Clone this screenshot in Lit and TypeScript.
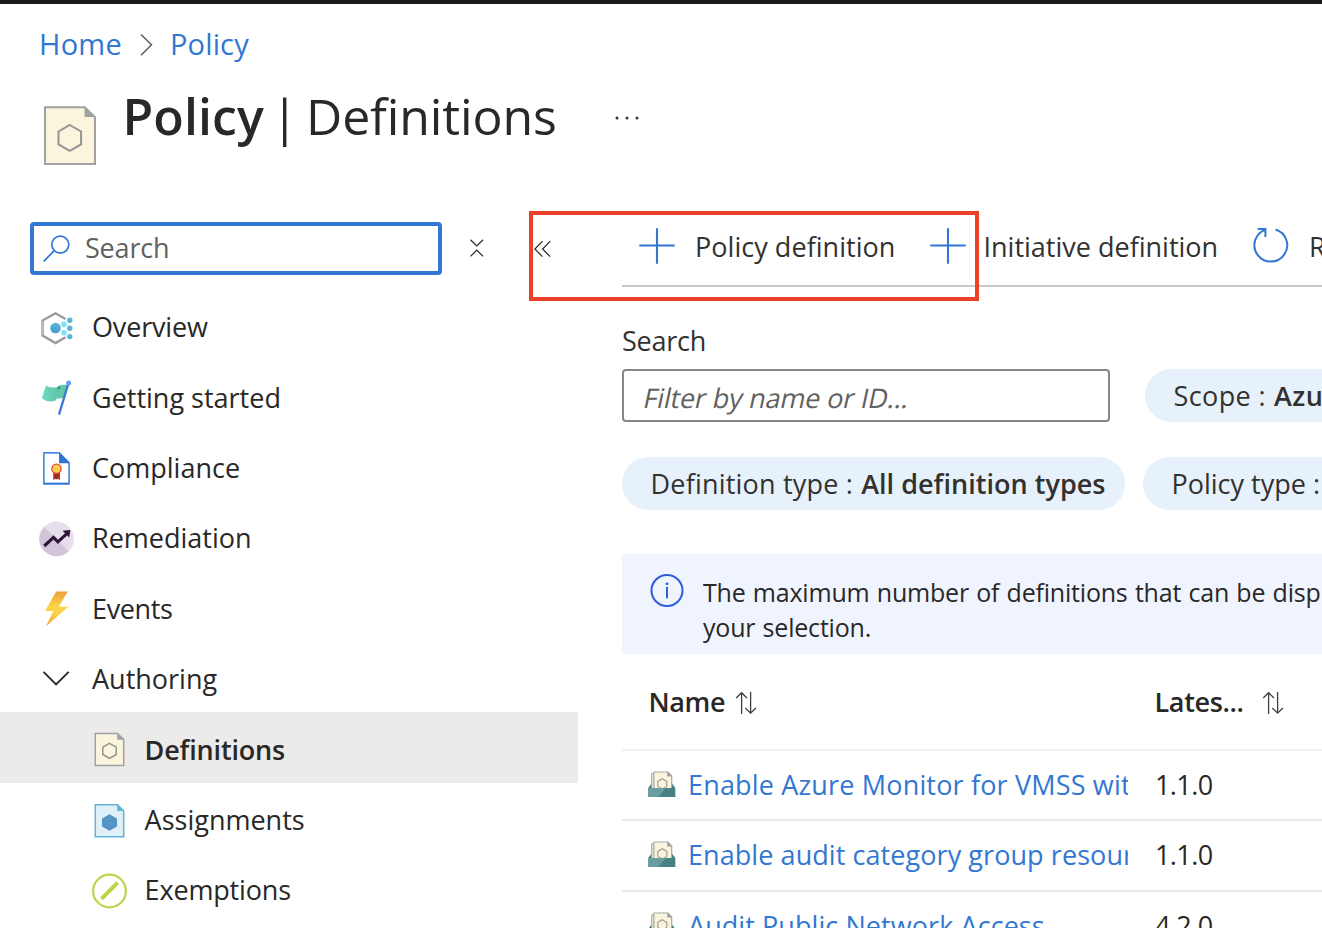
import { LitElement, html, css, svg } from "lit";
import { customElement } from "lit/decorators.js";
import { classMap } from "lit/directives/class-map.js";

const icons = {
  overview: svg`<svg width="36" height="36" viewBox="0 0 36 36">
    <defs><linearGradient id="ov" x1="0" y1="0" x2="0" y2="1"><stop offset="0" stop-color="#5cb6dc"/><stop offset="1" stop-color="#3f9cd0"/></linearGradient></defs>
    <path d="M26.500 9 16.500 3.300 3.600 10.500v15L16.500 33l10-5.800" fill="none" stroke="#9b9b9b" stroke-width="2.400"/>
    <path d="M3.600 10.500v15" stroke="#b5b5b5" stroke-width="2.400"/>
    <circle cx="16.500" cy="18" r="5.300" fill="url(#ov)"/>
    <circle cx="25" cy="14.400" r="2.800" fill="#7fe3ff"/><circle cx="25" cy="22.700" r="2.800" fill="#7fe3ff"/>
    <circle cx="30.800" cy="10.200" r="2.700" fill="#55b6d9"/><circle cx="30.800" cy="18.300" r="2.700" fill="#55b6d9"/><circle cx="30.800" cy="26.600" r="2.700" fill="#55b6d9"/>
  </svg>`,
  started: svg`<svg width="36" height="36" viewBox="0 0 36 36">
    <defs><linearGradient id="fl" x1="0" y1="0" x2="1" y2="0"><stop offset="0" stop-color="#6fdcc0"/><stop offset="1" stop-color="#5cc2a5"/></linearGradient></defs>
    <path d="M18.500 6.200q4-1.900 10.500-1.200l-4 13.500q-4.500-.8-7.500 1z" fill="#60c9aa"/>
    <path d="M7 5.700q6 2.700 11.500 1.600l2.500-.9-4.300 14.200q-8 2.500-13.900-2.300z" fill="url(#fl)"/>
    <path d="m17.500 8 3.700-1.700-.6 3.300z" fill="#3c8b75"/>
    <path d="M29.200 4 20 34.600" stroke="#3b7ad6" stroke-width="2.300"/>
    <circle cx="29.600" cy="3" r="2.500" fill="#6c9ee8"/>
  </svg>`,
  compliance: svg`<svg width="36" height="36" viewBox="0 0 36 36">
    <path d="M4.800 1.800h15.400l9.900 10v20.900H4.800z" fill="#fff" stroke="#4b8de4" stroke-width="1.700" stroke-linejoin="round"/>
    <path d="M4.800 32.700h25.300" stroke="#3173cf" stroke-width="1.700"/>
    <path d="M20 1.200 30.900 12.300H20z" fill="#3173cf"/>
    <path d="M14.300 21h6.600v8.200l-2-1.500-1.300.9-1.300-.9-2 1.500z" fill="#a52a22"/>
    <circle cx="17.500" cy="17.800" r="5.300" fill="#e34b3a"/><circle cx="17.500" cy="17.800" r="4" fill="#f6d04a"/>
  </svg>`,
  remediation: svg`<svg width="36" height="36" viewBox="0 0 36 36">
    <circle cx="17.500" cy="18" r="17.400" fill="#e6dfeb"/>
    <path d="M5.200 5.700a17.400 17.400 0 0 0 24.600 24.600z" fill="#d2c5da"/>
    <path d="m5.300 25 9.200-8.600 4.400 4.400 9-8.100" fill="none" stroke="#2f1338" stroke-width="3.100"/>
    <path d="M23.600 9.800 31.300 9l-1.100 7.600z" fill="#2f1338"/>
  </svg>`,
  events: svg`<svg width="36" height="36" viewBox="0 0 36 36">
    <defs><linearGradient id="ev" x1="0" y1="0" x2="0" y2="1"><stop offset="0" stop-color="#eea03c"/><stop offset=".45" stop-color="#fad648"/><stop offset=".65" stop-color="#f9d246"/><stop offset="1" stop-color="#ef9f3e"/></linearGradient></defs>
    <path d="M17.200 .5h11.600l-9 15.200h9.500L7 35.200 14.200 20H6z" fill="url(#ev)"/>
  </svg>`,
  authoring: svg`<svg width="36" height="36" viewBox="0 0 36 36">
    <path d="m4.500 9.900 12.600 12.500L29.700 9.900" fill="none" stroke="#292827" stroke-width="1.900"/>
  </svg>`,
  definitions: svg`<svg width="36" height="36" viewBox="0 0 36 36">
    <path d="M3.300 1.500h22.200l6.200 6v26H3.300z" fill="#fcf5de" stroke="#a0a1a2" stroke-width="1.500"/>
    <path d="M25.200 1.200 32 7.800h-6.800z" fill="#a0a1a2"/>
    <path d="m17.500 11.300 6.700 3.800v7.400l-6.700 3.800-6.700-3.800v-7.400z" fill="none" stroke="#949390" stroke-width="1.500"/>
  </svg>`,
  assignments: svg`<svg width="36" height="36" viewBox="0 0 36 36">
    <path d="M3.300 1.800h22.200l6.200 6v26H3.300z" fill="#e0f0f8" stroke="#65b2d7" stroke-width="1.500"/>
    <path d="M25.200 1.200 32 8.100h-6.800z" fill="#65b2d7"/>
    <path d="m17.500 11.200 7.500 4.200v8.100l-7.500 4.200-7.500-4.200v-8.100z" fill="#5594c4"/>
  </svg>`,
  exemptions: svg`<svg width="36" height="36" viewBox="0 0 36 36">
    <circle cx="17.500" cy="18" r="16.400" fill="#fff" stroke="#bad54b" stroke-width="2.200"/>
    <path d="M10.900 24.500 24.200 11.200" stroke="#bad54b" stroke-width="4" stroke-linecap="square"/>
  </svg>`,
};

type IconName = keyof typeof icons;

interface NavItem {
  label: string;
  icon: IconName;
  child?: boolean;
  active?: boolean;
  spacing?: "tight" | "tighter";
}

const nav: NavItem[] = [
  { label: "Overview", icon: "overview", spacing: "tight" },
  { label: "Getting started", icon: "started" },
  { label: "Compliance", icon: "compliance" },
  { label: "Remediation", icon: "remediation" },
  { label: "Events", icon: "events", spacing: "tighter" },
  { label: "Authoring", icon: "authoring" },
  { label: "Definitions", icon: "definitions", child: true, active: true, spacing: "tight" },
  { label: "Assignments", icon: "assignments", child: true },
  { label: "Exemptions", icon: "exemptions", child: true, spacing: "tight" },
];

const rows = [
  { name: "Enable Azure Monitor for VMSS with", version: "1.1.0", wide: true },
  { name: "Enable audit category group resource", version: "1.1.0", wide: false },
  { name: "Audit Public Network Access", version: "4.2.0", wide: false },
];

const plus = svg`<svg class="cmd-icon" width="36" height="36" viewBox="0 0 36 36"><path d="M18 .3v35.400M.3 17.500h35.400" stroke="#3277d2" stroke-width="2.100"/></svg>`;
const sort = svg`<svg class="sort" width="22" height="24" viewBox="0 0 22 24"><path d="M6.600 23V2M1.200 7 6.600 1.700 12 7M15.600 1v21M10.300 17l5.300 5.200L20.900 17" fill="none" stroke="#403f3e" stroke-width="1.300"/></svg>`;
const initiative = svg`<svg class="row-icon" width="28" height="28" viewBox="0 0 28 28">
  <path d="m3.200 14-2.900 4h27l-3-4z" fill="#397a7c"/>
  <path d="M3.700 3.800h17v16h-17z" fill="#f5efdc" stroke="#a6a7a7" stroke-width="1.100"/>
  <path d="M5.900 2h14l3.800 3.900V20H5.900z" fill="#fcf5de" stroke="#a6a7a7" stroke-width="1.200"/>
  <path d="M19.200 1.600 24.300 6.500h-5.100z" fill="#a0a1a2"/>
  <path d="m14.300 8.800 4.500 2.600v5l-4.500 2.600-4.500-2.600v-5z" fill="none" stroke="#a19f94" stroke-width="1.200"/>
  <path d="M.3 18h27v9H.3z" fill="#468183"/><path d="M.3 18h17.500l-7.500 9h-10z" fill="#6b9d9e"/>
</svg>`;

@customElement("app-root")
export class AppRoot extends LitElement {
  static styles = css`
    :host { display: block; position: relative; width: 100%; height: 928px; overflow: hidden; background: #fff;
      color: #292827; font: 27px/40px "Open Sans", "Noto Sans", sans-serif; white-space: nowrap; }
    * { box-sizing: border-box; }
    svg { display: block; flex: none; }
    a { color: #3277d2; text-decoration: none; }
    .topbar { height: 4px; background: #1c1b1c; }
    .crumbs { display: flex; align-items: center; padding: 20px 0 0 39px; font-size: 29px; line-height: 40px; }
    .crumbs .first { letter-spacing: .25px; }
    .crumbs .last { letter-spacing: .15px; }
    .crumbs svg { margin: 1px 17px 0 18px; }
    .heading { display: flex; height: 144px; padding: 22px 0 0 43px; }
    .heading .doc { margin: 19px 25.500px 0 0; }
    h1 { display: flex; margin: 0; font-size: 50px; line-height: 60px; font-weight: 400; }
    h1 b { font-weight: 600; width: 148.500px; letter-spacing: .1px; }
    h1 .bar { width: 35px; }
    h1 .name { letter-spacing: -.13px; }
    .more { margin: 25px 0 0 57px; }
    .body { display: grid; grid-template-columns: 578px minmax(0, 1fr); column-gap: 44px; }
    .side { padding-top: 14px; min-width: 0; }
    .tools { display: flex; align-items: center; padding-left: 30px; height: 53px; }
    .find { display: flex; align-items: center; width: 412px; height: 53px; border: 4px solid #3277d2; border-radius: 4px; padding-left: 9px; color: #616160; letter-spacing: -.19px; }
    .find svg { margin-right: 14px; }
    .find span { padding-bottom: 2px; }
    .fold { margin-left: 27px; }
    .collapse { margin-left: 49px; }
    .nav { list-style: none; margin: 14.600px 0 0; padding: 0; }
    .nav li { display: flex; align-items: center; height: 70.400px; padding: 5px 0 0 39px; }
    .nav li svg { margin: 1px 17px 0 0; }
    .nav li.child { padding-left: 92px; }
    .nav li.child span { margin-left: -.4px; }
    .nav li.active { background: #ecebea; font-weight: 600; height: 71px; padding-top: 4.400px; margin-bottom: -.6px; }
    .nav li.tight { letter-spacing: -.17px; }
    .nav li.tighter { letter-spacing: -.36px; }
    .main { min-width: 0; overflow: hidden; }
    .commands { display: flex; align-items: center; height: 79px; border-bottom: 2px solid #c8c8c8; padding-left: 17px; color: #323130; }
    .cmd-icon { margin-bottom: 2px; }
    .command { display: flex; align-items: center; flex: none; }
    .c1 { width: 291px; } .c1 svg { margin-right: 20px; } .c1 { letter-spacing: .04px; }
    .c2 { width: 323px; } .c2 svg { margin-right: 17.500px; }
    .c3 svg { margin-right: 20px; }
    .label { margin-top: 34px; height: 48px; color: #323130; letter-spacing: -.24px; }
    .filters { display: flex; height: 53px; gap: 35px; }
    .filter { flex: none; width: 488px; border: 2px solid #868686; border-radius: 4px; padding: 7px 0 0 18px; color: #616160; }
    .filter span { display: inline-block; transform: skewX(-12deg); transform-origin: 0 30px; letter-spacing: -.17px; }
    .pill { display: flex; align-items: center; flex: none; height: 53px; border-radius: 27px; background: #e7f1fb; color: #323130; padding: 1px 19px 0 28.500px; }
    .pill b { font-weight: 600; margin-left: 8px; }
    .pill.scope { letter-spacing: .4px; }
    .pill.kind { width: 503px; }
    .kind span { letter-spacing: .2px; }
    .kind b { letter-spacing: .03px; }
    .types { margin-top: 35px; gap: 18px; }
    .notice { display: flex; height: 100px; margin-top: 44px; padding: 20px 0 0 28px; background: #f0f4ff; font-size: 25px; line-height: 35px; }
    .notice svg { margin-right: 19px; }
    .notice p { margin: 1px 0 0; letter-spacing: -.2px; word-spacing: 1px; }
    .grid { display: grid; grid-template-columns: 506px 1fr; align-items: center; border-bottom: 2px solid #e9e9e9; height: 70.400px; padding: 0 0 .4px 27px; }
    .head { height: 97px; border-color: #f1f1f1; font-weight: 600; padding: 0 0 0 26.500px; }
    .cell { display: flex; align-items: center; min-width: 0; }
    .sort { margin-top: 2px; }
    .head .cell { gap: 9.500px; letter-spacing: -.35px; }
    .head .latest { gap: 18.500px; }
    .row-icon { margin: 0 12px 2px -1px; }
    .link { display: block; width: 440px; overflow: hidden; letter-spacing: .07px; }
    .link.wide { letter-spacing: .17px; }
    .version { letter-spacing: -.6px; }
    .callout { position: absolute; left: 529px; top: 211px; width: 450px; height: 90px; border: 4px solid #eb4129; pointer-events: none; }
  `;

  private navItem(item: NavItem) {
    const cls = classMap({
      child: !!item.child,
      active: !!item.active,
      tight: item.spacing === "tight",
      tighter: item.spacing === "tighter",
    });
    return html`<li class=${cls}>${icons[item.icon]}<span>${item.label}</span></li>`;
  }

  render() {
    return html`
      <div class="topbar"></div>
      <nav class="crumbs">
        <a class="first">Home</a>
        <svg width="13" height="24" viewBox="0 0 13 24"><path d="m1 1.500 10.500 10.300L1 22.300" fill="none" stroke="#5c5b5a" stroke-width="1.500"/></svg>
        <a class="last">Policy</a>
      </nav>
      <header class="heading">
        <svg class="doc" width="54" height="62" viewBox="0 0 54 62">
          <path d="M2 2.300h39.800L52 12.300v46.600H2z" fill="#fcf5de" stroke="#a0a1a2" stroke-width="2"/>
          <path d="M41.500 1.300 53 12h-11.500z" fill="#a0a1a2"/>
          <path d="m26.800 20 11.300 6.500v12.800l-11.300 6.500-11.300-6.500V26.500z" fill="none" stroke="#949390" stroke-width="2"/>
        </svg>
        <h1><b>Policy</b><span class="bar">|</span><span class="name">Definitions</span></h1>
        <svg class="more" width="26" height="14" viewBox="0 0 26 14"><g fill="#333"><circle cx="3" cy="7" r="1.500"/><circle cx="13" cy="7" r="1.500"/><circle cx="23" cy="7" r="1.500"/></g></svg>
      </header>
      <div class="body">
        <aside class="side">
          <div class="tools">
            <div class="find">
              <svg width="28" height="28" viewBox="0 0 28 28"><g fill="none" stroke="#3277d2" stroke-width="1.700"><circle cx="17.300" cy="9.600" r="8.500"/><path d="M11.200 15.700.7 26.300"/></g></svg>
              <span>Search</span>
            </div>
            <svg class="fold" width="16" height="20" viewBox="0 0 16 20"><path d="m1.500 .8 6.300 6.200 6.300-6.200M1.500 17.400l6.300-6.300 6.300 6.300" fill="none" stroke="#292827" stroke-width="1.200"/></svg>
            <svg class="collapse" width="18" height="18" viewBox="0 0 18 18"><path d="M8.500 1.200.9 9l7.600 7.700M16.200 1.200 8.600 9l7.600 7.700" fill="none" stroke="#292827" stroke-width="1.200"/></svg>
          </div>
          <ul class="nav">${nav.map((item) => this.navItem(item))}</ul>
        </aside>
        <main class="main">
          <div class="commands">
            <div class="command c1">${plus}<span>Policy definition</span></div>
            <div class="command c2">${plus}<span>Initiative definition</span></div>
            <div class="command c3">
              <svg class="cmd-icon" width="36" height="36" viewBox="0 0 36 36"><path d="M22.500 1.500A16.400 16.400 0 1 1 12.800 1.600M4.800 1h7.600v8" fill="none" stroke="#3277d2" stroke-width="2"/></svg>
              <span>Refresh</span>
            </div>
          </div>
          <div class="label">Search</div>
          <div class="filters">
            <div class="filter"><span>Filter by name or ID...</span></div>
            <div class="pill scope"><span>Scope :</span><b>Azure subscription</b></div>
          </div>
          <div class="filters types">
            <div class="pill kind"><span>Definition type :</span><b>All definition types</b></div>
            <div class="pill"><span>Policy type :</span><b>All policy types</b></div>
          </div>
          <div class="notice">
            <svg width="34" height="34" viewBox="0 0 34 34"><circle cx="17" cy="16.500" r="15.500" fill="none" stroke="#2a5fd8" stroke-width="2"/><path d="M17 13v11.300" stroke="#2a5fd8" stroke-width="2"/><circle cx="17" cy="9.800" r="1.400" fill="#2a5fd8"/></svg>
            <p>The maximum number of definitions that can be displayed<br />your selection.</p>
          </div>
          <div class="grid head">
            <div class="cell"><span>Name</span>${sort}</div>
            <div class="cell latest"><span>Lates...</span>${sort}</div>
          </div>
          ${rows.map(
            (row) => html`<div class="grid">
              <div class="cell">${initiative}<a class=${classMap({ link: true, wide: row.wide })}>${row.name}</a></div>
              <div class="cell version">${row.version}</div>
            </div>`
          )}
        </main>
      </div>
      <div class="callout"></div>
    `;
  }
}
